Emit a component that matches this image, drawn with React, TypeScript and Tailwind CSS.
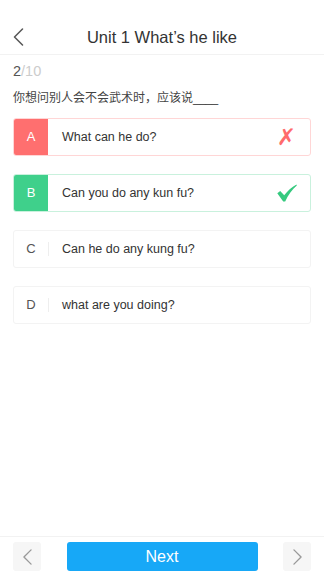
import clsx from 'clsx';

interface Option {
  key: string;
  text: string;
  state: 'wrong' | 'right' | 'idle';
}

const options: Option[] = [
  { key: 'A', text: 'What can he do?', state: 'wrong' },
  { key: 'B', text: 'Can you do any kun fu?', state: 'right' },
  { key: 'C', text: 'Can he do any kung fu?', state: 'idle' },
  { key: 'D', text: 'what are you doing?', state: 'idle' },
];

export default function App() {
  return (
    <div
      className="flex h-screen w-full flex-col bg-white text-[#333]"
      style={{ fontFamily: '"Liberation Sans", "Noto Sans CJK SC", sans-serif' }}
    >
      {/* Header */}
      <div className="relative flex h-[55px] items-center justify-center border-b border-[#f2f2f2] pt-[20px]">
        <button className="absolute left-[10px] top-[27px] flex h-[20px] w-[16px] items-center justify-center">
          <ChevronLeft className="h-[18px] w-[11px] text-[#555]" />
        </button>
        <h1 className="text-[16.5px] leading-none text-[#333]">Unit 1 What’s he like</h1>
      </div>

      {/* Progress + question */}
      <div className="px-[13px]">
        <p className="mt-[7px] text-[14.5px] leading-[18px]">
          <span className="text-[#555]">2</span>
          <span className="text-[#ccc]">/10</span>
        </p>
        <p className="mt-[10px] text-[12px] leading-[16px] text-[#444]">
          你想问别人会不会武术时，应该说<span className="tracking-[-0.5px]">____</span>
        </p>

        <div className="mt-[12px] flex flex-col gap-[18px]">
          {options.map((o) => (
            <OptionRow key={o.key} option={o} />
          ))}
        </div>
      </div>

      <div className="flex-1" />

      {/* Bottom bar */}
      <div className="flex items-center justify-between border-t border-[#f2f2f2] px-[13px] pb-[5px] pt-[5px]">
        <button className="flex h-[29px] w-[28px] items-center justify-center rounded-[3px] bg-[#f6f6f6]">
          <ChevronLeft className="h-[16px] w-[9px] text-[#999]" />
        </button>
        <button className="flex h-[29px] w-[191px] items-center justify-center rounded-[3px] bg-[#17a8f7] text-[16px] text-white">
          Next
        </button>
        <button className="flex h-[29px] w-[28px] items-center justify-center rounded-[3px] bg-[#f6f6f6]">
          <ChevronRight className="h-[16px] w-[9px] text-[#999]" />
        </button>
      </div>
    </div>
  );
}

function OptionRow({ option }: { option: Option }) {
  const { state } = option;
  return (
    <div
      className={clsx(
        'flex h-[38px] items-center overflow-hidden rounded-[3px] border',
        state === 'wrong' && 'border-[#ffd6d6]',
        state === 'right' && 'border-[#c9f1dd]',
        state === 'idle' && 'border-[#f3f3f3]'
      )}
    >
      <div
        className={clsx(
          'flex h-full w-[34px] shrink-0 items-center justify-center text-[13px]',
          state === 'wrong' && 'bg-[#ff6f6f] text-white',
          state === 'right' && 'bg-[#3fd08b] text-white',
          state === 'idle' && 'text-[#555]'
        )}
      >
        {option.key}
      </div>
      {state === 'idle' && <div className="h-[14px] w-px bg-[#eee]" />}
      <span className={clsx('flex-1 text-[12.5px] text-[#333]', state === 'idle' ? 'pl-[13px]' : 'pl-[14px]')}>
        {option.text}
      </span>
      {state === 'wrong' && (
        <span
          className="mr-[14px] text-[23px] font-bold leading-none text-[#ff6b6b]"
          style={{ fontFamily: '"DejaVu Sans", sans-serif' }}
        >
          ✗
        </span>
      )}
      {state === 'right' && <CheckMark />}
    </div>
  );
}

function CheckMark() {
  return (
    <svg className="mr-[13px] h-[18px] w-[20px]" viewBox="0 0 20 18">
      <path
        d="M0.3 9.3 L3.2 6.9 L7.2 11.3 C10.5 7 14.5 3 19.5 0.5 L19.8 1.4 C15.2 5.2 11.2 10.6 8.2 17.4 L6.2 17.4 Z"
        fill="#36c97f"
      />
    </svg>
  );
}

function ChevronLeft({ className }: { className?: string }) {
  return (
    <svg className={className} viewBox="0 0 10 18" fill="none" stroke="currentColor">
      <path d="M9 1 L1 9 L9 17" strokeWidth={1.5} strokeLinecap="round" strokeLinejoin="round" />
    </svg>
  );
}

function ChevronRight({ className }: { className?: string }) {
  return (
    <svg className={className} viewBox="0 0 10 18" fill="none" stroke="currentColor">
      <path d="M1 1 L9 9 L1 17" strokeWidth={1.5} strokeLinecap="round" strokeLinejoin="round" />
    </svg>
  );
}
